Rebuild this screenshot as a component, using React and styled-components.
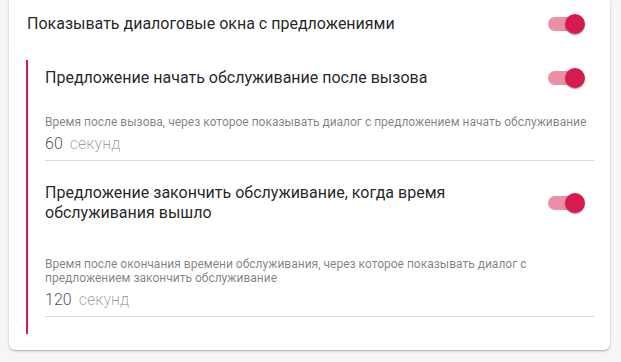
import styled, { createGlobalStyle } from 'styled-components';

const GlobalStyle = createGlobalStyle`
  html, body {
    margin: 0;
    padding: 0;
    background: #f6f6f6;
  }
  * {
    box-sizing: border-box;
  }
`;

const Page = styled.div`
  min-height: 100vh;
  padding: 0 11px 0 9px;
  font-family: Roboto, 'Liberation Sans', Arial, sans-serif;
`;

const Card = styled.div`
  background: #fff;
  border-radius: 0 0 6px 6px;
  box-shadow: 0 1px 3px rgba(0, 0, 0, 0.2), 0 1px 1px rgba(0, 0, 0, 0.12);
  padding-bottom: 16px;
`;

const MainRow = styled.div`
  display: flex;
  align-items: center;
  justify-content: space-between;
  height: 48px;
  padding: 0 25px 0 18px;
`;

const Label = styled.div`
  font-size: 16px;
  line-height: 20px;
  color: rgba(0, 0, 0, 0.87);
  max-width: ${(p) => p.$maxWidth || 'none'};
`;

const Nested = styled.div`
  margin: 12px 16px 0 17px;
  border-left: 2px solid #d81b4f;
  padding: 0 0 17px 17px;
`;

const SubRow = styled.div`
  display: flex;
  align-items: center;
  justify-content: space-between;
  height: ${(p) => p.$height}px;
  margin-top: ${(p) => p.$top || 0}px;
  padding-right: 9px;
`;

const Helper = styled.div`
  font-size: 12px;
  line-height: 14px;
  color: rgba(0, 0, 0, 0.5);
  margin-top: ${(p) => p.$top}px;
`;

const Field = styled.div`
  display: flex;
  align-items: baseline;
  gap: 7px;
  margin-top: 5px;
  padding-bottom: 7px;
  border-bottom: 1px solid #d9d9d9;
  font-size: 16px;
  font-weight: 300;
  line-height: 19px;
`;

const Value = styled.span`
  color: rgba(0, 0, 0, 0.72);
`;

const Unit = styled.span`
  color: rgba(0, 0, 0, 0.38);
`;

const SwitchRoot = styled.div`
  position: relative;
  width: 37px;
  height: 20px;
  flex-shrink: 0;
`;

const Track = styled.div`
  position: absolute;
  left: 0;
  top: 3px;
  width: 34px;
  height: 14px;
  border-radius: 7px;
  background: #ec8fa6;
`;

const Thumb = styled.div`
  position: absolute;
  right: 0;
  top: 0;
  width: 20px;
  height: 20px;
  border-radius: 50%;
  background: #d81b4f;
  box-shadow: 0 2px 1px -1px rgba(0, 0, 0, 0.2), 0 1px 1px rgba(0, 0, 0, 0.14),
    0 1px 3px rgba(0, 0, 0, 0.12);
`;

function Switch() {
  return (
    <SwitchRoot>
      <Track />
      <Thumb />
    </SwitchRoot>
  );
}

export default function App() {
  return (
    <Page>
      <GlobalStyle />
      <Card>
        <MainRow>
          <Label>Показывать диалоговые окна с предложениями</Label>
          <Switch />
        </MainRow>
        <Nested>
          <SubRow $height={36}>
            <Label>Предложение начать обслуживание после вызова</Label>
            <Switch />
          </SubRow>
          <Helper $top={19}>
            Время после вызова, через которое показывать диалог с предложением начать обслуживание
          </Helper>
          <Field>
            <Value>60</Value>
            <Unit>секунд</Unit>
          </Field>
          <SubRow $height={40} $top={22}>
            <Label $maxWidth="420px">
              Предложение закончить обслуживание, когда время обслуживания вышло
            </Label>
            <Switch />
          </SubRow>
          <Helper $top={34}>
            Время после окончания времени обслуживания, через которое показывать диалог с
            предложением закончить обслуживание
          </Helper>
          <Field>
            <Value>120</Value>
            <Unit>секунд</Unit>
          </Field>
        </Nested>
      </Card>
    </Page>
  );
}
